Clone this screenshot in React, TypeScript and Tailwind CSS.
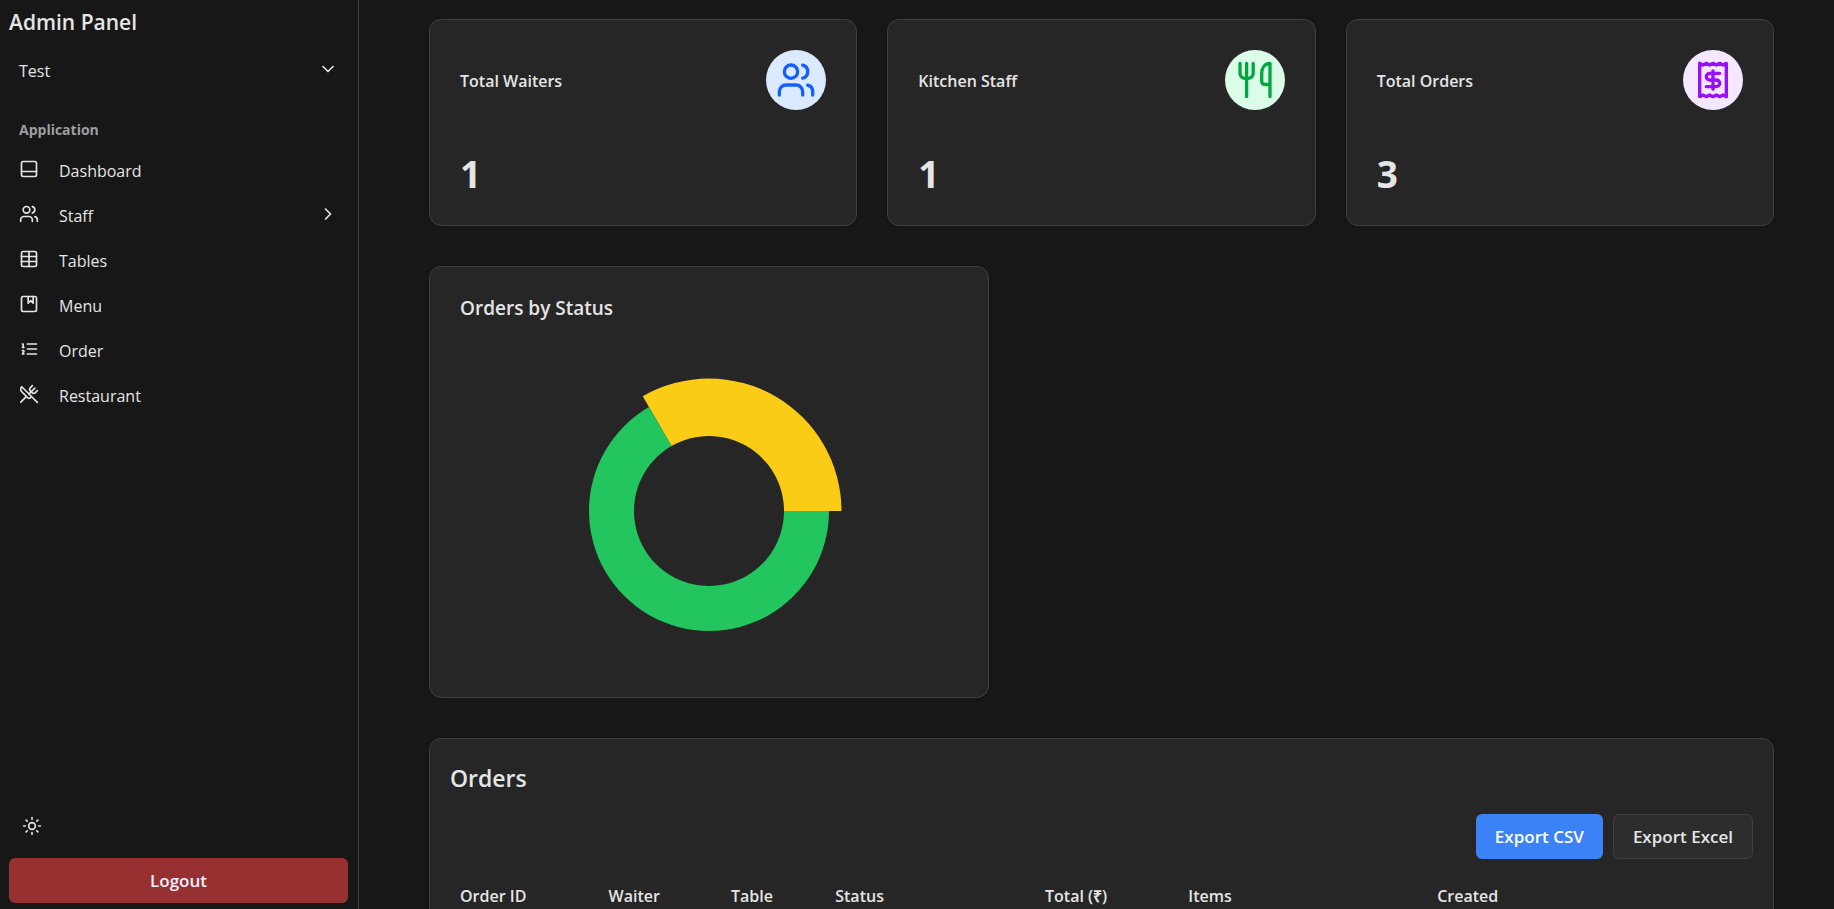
import React, { useState } from 'react';
import {
  Album,
  ChevronDown,
  ChevronRight,
  PanelBottom,
  Sun,
  Table,
  Users,
  UtensilsCrossed,
} from 'lucide-react';

type IconProps = { className?: string };

const OrderListIcon: React.FC<IconProps> = ({ className }) => (
  <svg
    viewBox="0 0 24 24"
    fill="none"
    stroke="currentColor"
    strokeWidth="2"
    strokeLinecap="round"
    strokeLinejoin="round"
    className={className}
  >
    <path d="M10 6h11M10 12h11M10 18h11" />
    <path d="M4 6h1v4M4 10h2M6 18H4c0-1 2-2 2-3s-1-1.5-2-1" />
  </svg>
);

const ForkKnifeIcon: React.FC<IconProps> = ({ className }) => (
  <svg
    viewBox="0 0 40 40"
    fill="none"
    stroke="currentColor"
    strokeWidth="3.3"
    strokeLinecap="round"
    strokeLinejoin="round"
    className={className}
  >
    <path d="M5 3.5v10c0 3 2.500 5 6.600 5s6.600-2 6.600-5v-10M11.600 3.500v33" />
    <path d="M35 36.500v-33c-5 0-8.300 4-8.300 10v7.500c0 2 1.300 3.500 3.500 3.500H35" />
  </svg>
);

const ReceiptIcon: React.FC<IconProps> = ({ className }) => (
  <svg
    viewBox="0 0 24 24"
    fill="none"
    stroke="currentColor"
    strokeWidth="2"
    strokeLinecap="round"
    strokeLinejoin="round"
    className={className}
  >
    <path d="M4 2v20l2-1 2 1 2-1 2 1 2-1 2 1 2-1 2 1V2l-2 1-2-1-2 1-2-1-2 1-2-1-2 1Z" />
    <path d="M16 8h-6a2 2 0 1 0 0 4h4a2 2 0 1 1 0 4H8" />
    <path d="M12 17.5v-11" />
  </svg>
);

const navItems = [
  { label: 'Dashboard', icon: PanelBottom },
  { label: 'Staff', icon: Users, expandable: true },
  { label: 'Tables', icon: Table },
  { label: 'Menu', icon: Album },
  { label: 'Order', icon: OrderListIcon },
  { label: 'Restaurant', icon: UtensilsCrossed },
];

const stats = [
  { label: 'Total Waiters', value: 1, icon: Users, color: 'bg-blue-100 text-blue-600' },
  { label: 'Kitchen Staff', value: 1, icon: ForkKnifeIcon, color: 'bg-green-100 text-green-600' },
  { label: 'Total Orders', value: 3, icon: ReceiptIcon, color: 'bg-purple-100 text-purple-600' },
];

const orderStatus = [
  { name: 'Pending', value: 1, fill: '#facc15' },
  { name: 'Completed', value: 2, fill: '#22c55e' },
];

const columns = [
  { label: 'Order ID', width: 'w-[11.4%]' },
  { label: 'Waiter', width: 'w-[9.4%]' },
  { label: 'Table', width: 'w-[8%]' },
  { label: 'Status', width: 'w-[16.1%]' },
  { label: 'Total (₹)', width: 'w-[11%]' },
  { label: 'Items', width: 'w-[19.1%]' },
  { label: 'Created', width: 'w-[25%]' },
];

const slicePath = (start: number, end: number, inner: number, outer: number) => {
  const point = (r: number, deg: number) => {
    const rad = (-deg * Math.PI) / 180;
    return `${r * Math.cos(rad)},${r * Math.sin(rad)}`;
  };
  const large = end - start > 180 ? 1 : 0;
  return `M${point(outer, start)} A${outer},${outer} 0 ${large} 0 ${point(outer, end)} L${point(inner, end)} A${inner},${inner} 0 ${large} 1 ${point(inner, start)} Z`;
};

const Sidebar: React.FC = () => (
  <aside className="w-[359px] shrink-0 flex flex-col border-r border-[#3f3f3f] pr-[10px] pb-[6px] pl-[9px]">
    <h1 className="pt-2 text-[21px] leading-7 font-semibold">Admin Panel</h1>
    <button className="mt-3 flex h-[45px] items-center justify-between px-[10px] text-base">
      Test
      <ChevronDown className="mb-1 size-5" />
    </button>

    <nav className="mt-[17px]">
      <h2 className="h-[38px] px-[10px] text-sm leading-10 font-bold text-[#9f9fa0]">Application</h2>
      <ul>
        {navItems.map(({ label, icon: Icon, expandable }) => (
          <li key={label}>
            <a href="#" className="flex h-[45px] items-center gap-5 px-[10px] text-base">
              <Icon className="mb-1 size-5" />
              <span className="flex-1">{label}</span>
              {expandable && <ChevronRight className="mb-1 size-5" />}
            </a>
          </li>
        ))}
      </ul>
    </nav>

    <button aria-label="Toggle theme" className="mt-auto mb-[10px] flex size-[45px] items-center justify-center">
      <Sun className="size-5" />
    </button>
    <button className="h-[45px] rounded-md bg-[#973131] text-[17px] font-semibold text-[#eef0ff]">Logout</button>
  </aside>
);

const StatusChart: React.FC = () => {
  const [active, setActive] = useState(0);
  const total = orderStatus.reduce((sum, s) => sum + s.value, 0);
  let angle = 0;

  return (
    <svg viewBox="-156 -156 312 312" className="mx-auto mt-9 size-[312px]">
      {orderStatus.map((s, i) => {
        const start = angle;
        angle += (s.value / total) * 360;
        return (
          <path
            key={s.name}
            d={slicePath(start, angle, 75, i === active ? 132.5 : 120)}
            fill={s.fill}
            onMouseEnter={() => setActive(i)}
          />
        );
      })}
    </svg>
  );
};

export default function App() {
  return (
    <div className="flex h-screen bg-[#171717] font-['Open_Sans',sans-serif] text-[#e5e5e5]">
      <Sidebar />

      <main className="flex-1 space-y-10 overflow-y-auto pt-[19px] pr-[60px] pl-[70px] [scrollbar-width:none]">
        {/* Totals */}
        <div className="grid grid-cols-3 gap-[30px]">
          {stats.map(({ label, value, icon: Icon, color }) => (
            <div key={label} className="rounded-xl border border-[#404040] bg-[#262626] p-[30px] shadow-sm">
              <div className="flex items-center justify-between">
                <h2 className="pt-0.5 text-base font-semibold">{label}</h2>
                <div className={`flex size-[60px] items-center justify-center rounded-full ${color}`}>
                  <Icon className="size-10" />
                </div>
              </div>
              <p className="mt-[42px] text-[37px] leading-[43px] font-bold">{value}</p>
            </div>
          ))}
        </div>

        {/* Status chart */}
        <div className="w-[560px] rounded-xl border border-[#404040] bg-[#262626] p-[30px] shadow-sm">
          <h2 className="text-[19px] leading-[22px] font-semibold">Orders by Status</h2>
          <StatusChart />
        </div>

        {/* Orders */}
        <section className="rounded-xl border border-[#404040] bg-[#262626] p-5 shadow-sm">
          <h2 className="text-[23px] leading-[39px] font-semibold">Orders</h2>
          <div className="mt-4 flex justify-end gap-[10px]">
            <button className="h-[45px] rounded-md bg-[#3b82f6] px-[19px] text-[17px] font-semibold text-white">
              Export CSV
            </button>
            <button className="h-[45px] rounded-md border border-[#404040] bg-[#2d2d2d] px-[19px] text-[17px] font-semibold">
              Export Excel
            </button>
          </div>
          <table className="mt-3 w-full table-fixed text-base">
            <thead>
              <tr className="border-b border-[#404040]">
                {columns.map((c) => (
                  <th key={c.label} className={`h-[50px] px-[10px] text-left font-semibold ${c.width}`}>
                    {c.label}
                  </th>
                ))}
              </tr>
            </thead>
          </table>
        </section>
      </main>
    </div>
  );
}
